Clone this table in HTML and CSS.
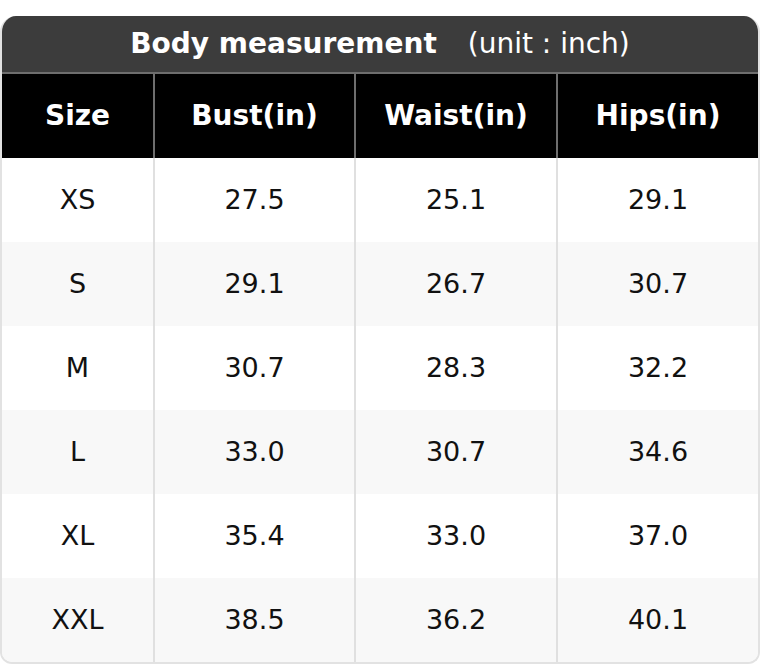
FILE: index.html
```html
<!DOCTYPE html>
<html>
<head>
<meta charset="utf-8">
<link rel="stylesheet" href="styles.css">
</head>
<body>
<div class="chart">
  <div class="title"><span class="title-main">Body measurement</span><span class="title-unit">(unit : inch)</span></div>
  <table class="grid">
    <colgroup><col class="c1"><col class="c2"><col class="c3"><col class="c4"></colgroup>
    <thead>
      <tr><th>Size</th><th>Bust(in)</th><th>Waist(in)</th><th>Hips(in)</th></tr>
    </thead>
    <tbody>
      <tr><td>XS</td><td>27.5</td><td>25.1</td><td>29.1</td></tr>
      <tr><td>S</td><td>29.1</td><td>26.7</td><td>30.7</td></tr>
      <tr><td>M</td><td>30.7</td><td>28.3</td><td>32.2</td></tr>
      <tr><td>L</td><td>33.0</td><td>30.7</td><td>34.6</td></tr>
      <tr><td>XL</td><td>35.4</td><td>33.0</td><td>37.0</td></tr>
      <tr><td>XXL</td><td>38.5</td><td>36.2</td><td>40.1</td></tr>
    </tbody>
  </table>
</div>
</body>
</html>
```
FILE: styles.css
```css
html, body {
  margin: 0;
  padding: 0;
  background: #ffffff;
}
body {
  padding-top: 16px;
  font-family: "DejaVu Sans", Verdana, sans-serif;
}
.chart {
  width: 760px;
  box-sizing: border-box;
  border-radius: 16px 16px 12px 12px;
  overflow: hidden;
  border: 2px solid #e2e2e2;
  border-top: none;
  background: #fff;
}
.title {
  height: 56px;
  box-sizing: border-box;
  padding-bottom: 2px;
  margin: 0 -2px;
  background: #3c3c3c;
  color: #ffffff;
  display: flex;
  align-items: center;
  justify-content: center;
  font-size: 28px;
  border-bottom: 2px solid #6e6e6e;
  height: 58px;
}
.title-main {
  font-weight: bold;
}
.title-unit {
  margin-left: 31px;
  font-weight: normal;
}
.grid {
  width: 756px;
  border-collapse: separate;
  border-spacing: 0;
  table-layout: fixed;
  font-size: 27px;
}
.c1 { width: 153px; }
.c2 { width: 201px; }
.c3 { width: 202px; }
.c4 { width: 200px; }
.grid th, .grid td {
  height: 84px;
  padding: 0 0 2px 0;
  text-align: center;
  vertical-align: middle;
  box-sizing: border-box;
}
.grid th {
  background: #000000;
  color: #ffffff;
  font-size: 28px;
  font-weight: bold;
  border-right: 2px solid #6e6e6e;
}
.grid th:last-child {
  border-right: none;
}
.grid td {
  color: #111111;
  border-right: 2px solid #e0e0e0;
}
.grid td:last-child {
  border-right: none;
}
.grid tbody tr:nth-child(even) td {
  background: #f8f8f8;
}
```
